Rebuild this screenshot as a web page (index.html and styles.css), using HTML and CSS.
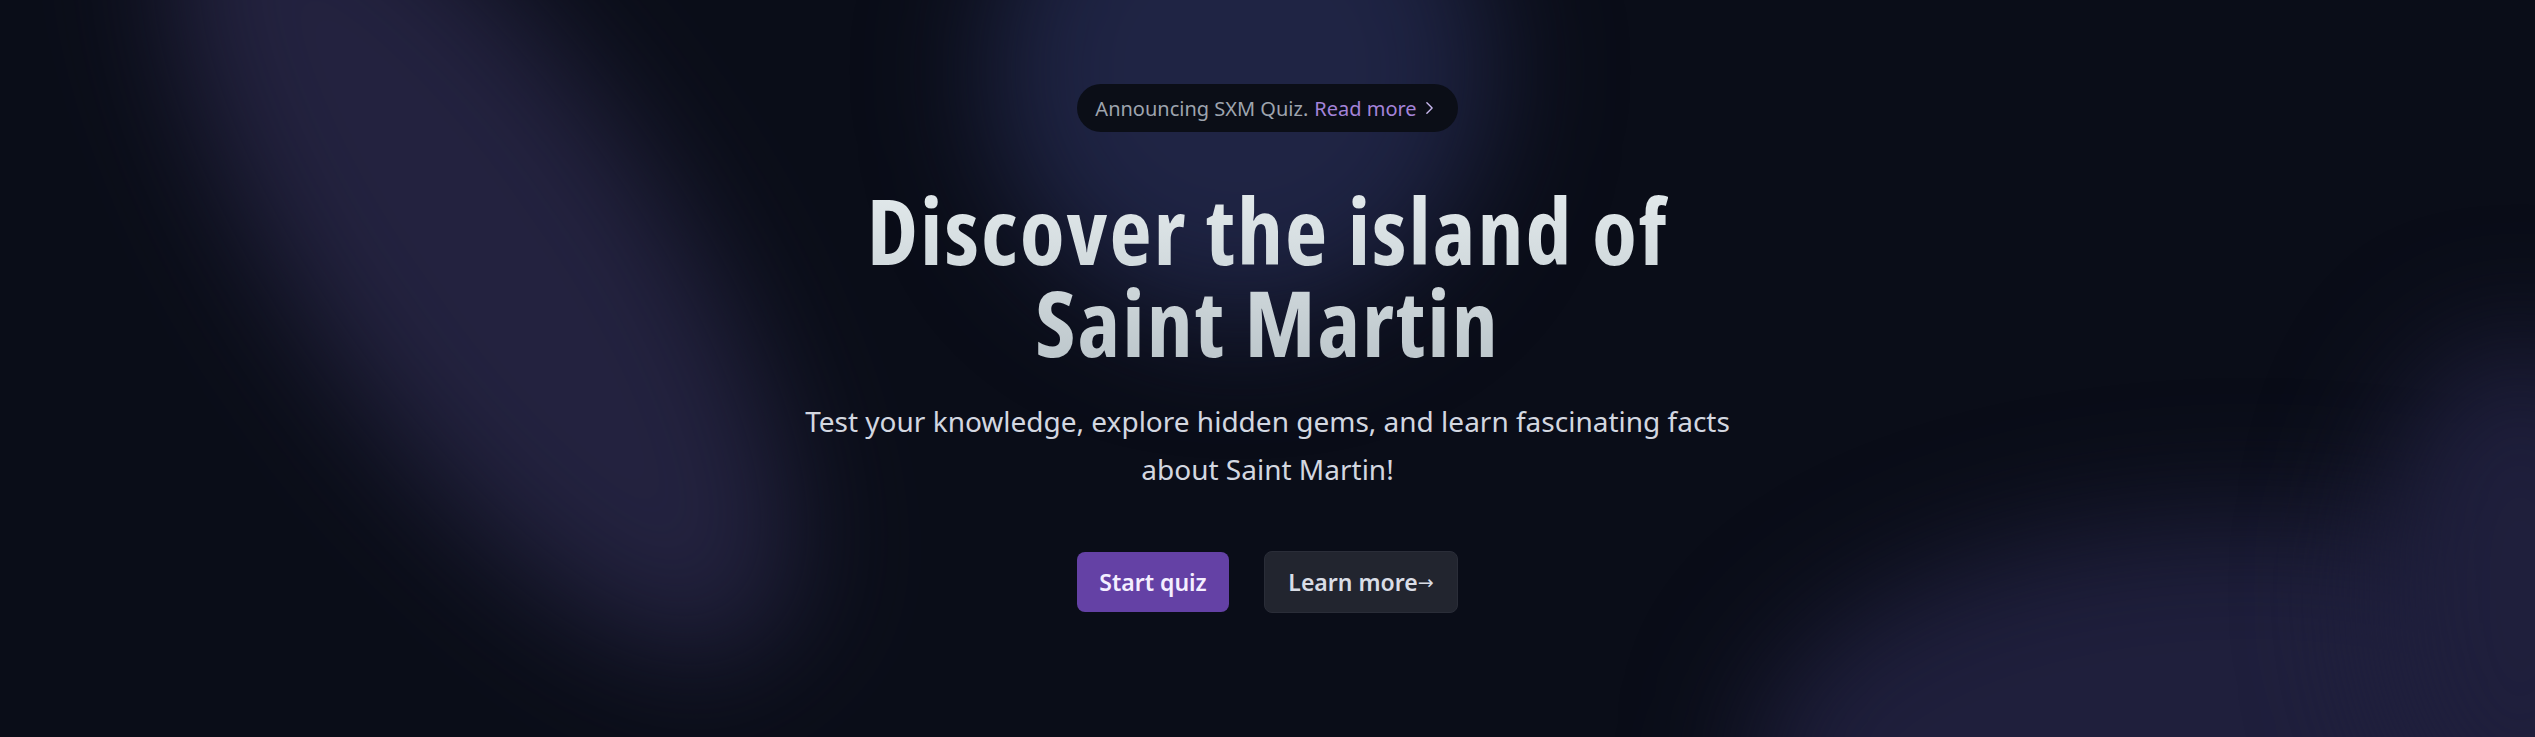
FILE: index.html
```html
<!DOCTYPE html>
<html lang="en">
<head>
<meta charset="utf-8">
<title>SXM Quiz</title>
<link rel="stylesheet" href="styles.css">
</head>
<body>
<div class="bg" aria-hidden="true">
  <div class="blob blob-a"></div>
  <div class="blob blob-b"></div>
  <div class="blob blob-c"></div>
  <div class="blob blob-d"></div>
</div>
<main class="hero">
  <div class="announce">
    <span class="announce-text">Announcing SXM Quiz.</span>
    <a class="announce-link" href="#">Read more
      <svg class="chev" viewBox="0 0 10 16" width="9" height="14"><path d="M2 2l6 6-6 6" fill="none" stroke="currentColor" stroke-width="1.6" stroke-linecap="round" stroke-linejoin="round"/></svg>
    </a>
  </div>
  <h1 class="title">Discover the island of<br>Saint Martin</h1>
  <p class="lead">Test your knowledge, explore hidden gems, and learn fascinating facts about Saint Martin!</p>
  <div class="actions">
    <a class="btn btn-primary" href="#">Start quiz</a>
    <a class="btn btn-secondary" href="#">Learn more<span class="arrow">→</span></a>
  </div>
</main>
</body>
</html>
```

FILE: styles.css
```css
* { box-sizing: border-box; }
html, body { margin: 0; padding: 0; }
body {
  background: #0a0d18;
  min-height: 737px;
  overflow: hidden;
  font-family: "Noto Sans", "Open Sans", sans-serif;
  position: relative;
}
.bg {
  position: absolute;
  inset: 0;
  overflow: hidden;
  z-index: 0;
}
.blob {
  position: absolute;
  border-radius: 50%;
  filter: blur(60px);
}
.blob-a {
  left: 300px;
  top: -230px;
  width: 360px;
  height: 960px;
  background: #23223f;
  transform: rotate(-35deg);
}
.blob-b {
  left: 990px;
  top: -180px;
  width: 500px;
  height: 500px;
  background: #1f2444;
}
.blob-c {
  left: 1750px;
  top: 520px;
  width: 1000px;
  height: 500px;
  background: #1f1f3c;
}
.blob-d {
  left: 2370px;
  top: 340px;
  width: 300px;
  height: 500px;
  background: #1f1f3c;
}
.hero {
  position: relative;
  z-index: 1;
  display: flex;
  flex-direction: column;
  align-items: center;
  padding-top: 84px;
}
.announce {
  display: flex;
  align-items: center;
  gap: 6px;
  height: 48px;
  padding: 0 24px 0 18px;
  border-radius: 999px;
  background: #0b0e17;
  font-size: 20px;
}
.announce-text { color: #9ea4ae; }
.announce-link {
  color: #a483d9;
  text-decoration: none;
  display: flex;
  align-items: center;
  gap: 8px;
}
.chev { color: #c8b8ee; }
.title {
  margin: 52px 0 0;
  font-family: "Open Sans", sans-serif;
  font-stretch: 75%;
  font-weight: 700;
  font-size: 92px;
  line-height: 92px;
  letter-spacing: 2px;
  text-align: center;
  background: linear-gradient(#e3eaec, #bcc6cb);
  -webkit-background-clip: text;
  background-clip: text;
  color: transparent;
}
.lead {
  margin: 29px 0 0;
  max-width: 960px;
  text-align: center;
  font-size: 28px;
  line-height: 48px;
  color: #d3d7e0;
}
.actions {
  margin-top: 58px;
  display: flex;
  align-items: center;
  gap: 35px;
}
.btn {
  display: flex;
  align-items: center;
  justify-content: center;
  border-radius: 8px;
  text-decoration: none;
  font-weight: 600;
  font-size: 23px;
}
.btn-primary {
  width: 152px;
  height: 60px;
  background: #6441a5;
  color: #f4efff;
}
.btn-secondary {
  width: 194px;
  height: 62px;
  background: #22252f;
  border: 1px solid #2a2d38;
  color: #d9dde6;
}
.arrow {
  font-family: "DejaVu Sans", sans-serif;
  font-weight: 400;
  font-size: 19px;
}
```
